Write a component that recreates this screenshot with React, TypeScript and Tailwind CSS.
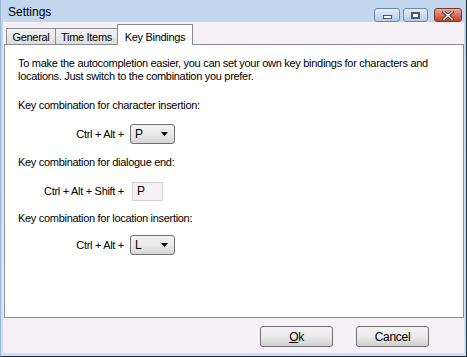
const font = { fontFamily: '"Liberation Sans", Arial, sans-serif' };

function CaptionButtons() {
  return (
    <div className="flex items-center gap-[3px] pt-[8px]">
      <div className="w-[26px] h-[14px] rounded-[3px] border border-[#6f87a8] bg-gradient-to-b from-[#e4eefa] via-[#cbdcf1] to-[#b3cbe9] flex items-center justify-center">
        <div className="w-[9px] h-[4px] bg-white border border-[#4a5a70] mt-[3px]" />
      </div>
      <div className="w-[25px] h-[14px] rounded-[3px] border border-[#6f87a8] bg-gradient-to-b from-[#e4eefa] via-[#cbdcf1] to-[#b3cbe9] flex items-center justify-center">
        <div className="w-[9px] h-[7px] border-2 border-[#4a5a70] bg-white" />
      </div>
      <div className="ml-[3px] w-[28px] h-[14px] rounded-[3px] border border-[#7a3a2f] bg-gradient-to-b from-[#eba999] via-[#d6705b] to-[#c2442c] flex items-center justify-center">
        <svg width="12" height="9" viewBox="0 0 12 9">
          <path d="M2 1 L10 8 M10 1 L2 8" stroke="#3b2a2a" strokeWidth="3.2" strokeLinecap="square" />
          <path d="M2 1 L10 8 M10 1 L2 8" stroke="#ffffff" strokeWidth="1.6" strokeLinecap="square" />
        </svg>
      </div>
    </div>
  );
}

function Combo({ value }: { value: string }) {
  return (
    <div className="w-[45px] h-[20px] rounded-[3px] border border-[#707070] bg-gradient-to-b from-[#f2f2f2] via-[#ebebeb] to-[#d6d6d6] flex items-center pl-[4px] pr-[6px]">
      <span className="flex-1 text-[12px] leading-none">{value}</span>
      <svg width="7" height="4" viewBox="0 0 7 4">
        <path d="M0 0 H7 L3.5 4 Z" fill="#000" />
      </svg>
    </div>
  );
}

function KeyRow({ label, children }: { label: string; children: React.ReactNode }) {
  return (
    <div className="flex items-center">
      <div className="w-[106px] text-right shrink-0">{label}</div>
      <div className="ml-[6px]">{children}</div>
    </div>
  );
}

function Tab({ label, width, active }: { label: string; width: string; active?: boolean }) {
  if (active) {
    return (
      <div className={`relative z-10 h-[21px] -mb-px pt-[4px] text-center bg-white border border-b-0 border-[#898c95] ${width}`}>
        {label}
      </div>
    );
  }
  return (
    <div className={`h-[16px] pt-[2px] text-center bg-gradient-to-b from-[#f3f3f3] to-[#dcdcdc] border border-b-0 border-[#898c95] leading-[13px] -mr-px ${width}`}>
      {label}
    </div>
  );
}

export default function App() {
  return (
    <div className="w-[467px] h-[357px] overflow-hidden" style={font}>
      <div className="w-full h-full flex flex-col bg-gradient-to-b from-[#c2d6ee] to-[#cfe0f4] border-r border-b border-[#1f2a38] border-l border-l-[#9fb6d2]">
        {/* title bar */}
        <div className="h-[22px] flex justify-between pl-[7px] pr-[4px] shrink-0">
          <div className="pt-[5px] text-[12px] text-black leading-[14px]">Settings</div>
          <CaptionButtons />
        </div>

        {/* client area */}
        <div className="flex-1 mx-[2px] mb-[3px] bg-[#f6f1f6] flex flex-col text-[11px] tracking-[-0.3px] text-black">
          <div className="flex items-end h-[22px] pl-[3px] shrink-0">
            <Tab label="General" width="w-[50px]" />
            <Tab label="Time Items" width="w-[63px]" />
            <Tab label="Key Bindings" width="w-[76px]" active />
          </div>

          <div className="ml-[1px] h-[274px] bg-white border border-[#898c95] px-[13px] pt-[12px] leading-[13px]">
            <p className="w-[432px]">
              To make the autocompletion easier, you can set your own key bindings for characters and locations. Just switch to the combination you prefer.
            </p>
            <div className="mt-[16px]">Key combination for character insertion:</div>
            <div className="mt-[12px]">
              <KeyRow label="Ctrl + Alt +">
                <Combo value="P" />
              </KeyRow>
            </div>
            <div className="mt-[12px]">Key combination for dialogue end:</div>
            <div className="mt-[13px]">
              <KeyRow label="Ctrl + Alt + Shift +">
                <div className="ml-[2px] w-[31px] h-[19px] border border-[#d5ced8] bg-[#f6f1f6] pl-[4px] flex items-center text-[12px]">
                  P
                </div>
              </KeyRow>
            </div>
            <div className="mt-[11px]">Key combination for location insertion:</div>
            <div className="mt-[10px]">
              <KeyRow label="Ctrl + Alt +">
                <Combo value="L" />
              </KeyRow>
            </div>
          </div>

          <div className="flex justify-end gap-[23px] pr-[35px] mt-[8px]">
            <button className="w-[73px] h-[21px] rounded-[3px] border border-[#707070] bg-gradient-to-b from-[#f2f2f2] via-[#ebebeb] to-[#cfcfcf] text-[12px]">
              <span className="underline">O</span>k
            </button>
            <button className="w-[73px] h-[21px] rounded-[3px] border border-[#707070] bg-gradient-to-b from-[#f2f2f2] via-[#ebebeb] to-[#cfcfcf] text-[12px]">
              Cancel
            </button>
          </div>
        </div>
      </div>
    </div>
  );
}
